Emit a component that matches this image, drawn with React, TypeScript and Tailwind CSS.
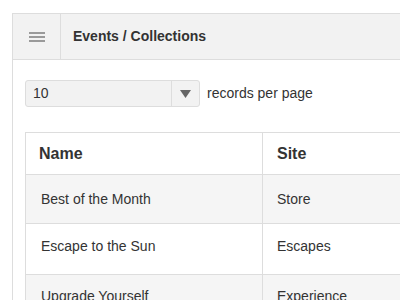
import React from "react";

const rows = [
  { name: "Best of the Month", site: "Store", rowCls: "h-[49px] bg-[#f5f5f5]", padCls: "pt-[16px]" },
  { name: "Escape to the Sun", site: "Escapes", rowCls: "h-[51px] bg-white", padCls: "pt-[14px]" },
  { name: "Upgrade Yourself", site: "Experience", rowCls: "h-[50px] bg-[#f5f5f5]", padCls: "pt-[13px]" },
];

export default function App() {
  return (
    <div
      className="w-[400px] h-[300px] overflow-hidden bg-white"
      style={{ fontFamily: '"Liberation Sans", Arial, sans-serif' }}
    >
      <div className="ml-[12px] mt-[13px] w-[420px] h-[400px] border-l border-t border-[#dddddd] bg-white">
        <div className="flex h-[46px] bg-[#f2f2f2] border-b border-[#dddddd]">
          <div className="w-[48px] border-r border-[#dddddd] flex items-center justify-center">
            <div className="flex flex-col gap-[2px] w-[16px]">
              <div className="h-[2px] bg-[#9a9a9a]" />
              <div className="h-[2px] bg-[#9a9a9a]" />
              <div className="h-[2px] bg-[#9a9a9a]" />
            </div>
          </div>
          <div className="flex items-center pl-[12px] text-[14px] font-bold text-[#333333]">
            Events / Collections
          </div>
        </div>
        <div className="pl-[12px] pt-[20px]">
          <div className="flex items-center gap-[7px]">
            <div className="flex w-[175px] h-[27px] rounded-[3px] border border-[#dddddd] bg-[#f2f2f2]">
              <div className="flex-1 flex items-center pl-[7px] text-[14px] text-[#333333]">10</div>
              <div className="w-[28px] border-l border-[#dddddd] flex items-center justify-center">
                <svg width="11" height="8" viewBox="0 0 11 8">
                  <path d="M0 0 L11 0 L5.5 8 Z" fill="#666666" />
                </svg>
              </div>
            </div>
            <div className="text-[14px] text-[#333333]">records per page</div>
          </div>
          <div className="mt-[25px] border-l border-t border-[#dddddd]">
            <div className="flex h-[42px] border-b border-[#dddddd] bg-white text-[16px] font-bold text-[#333333]">
              <div className="w-[237px] border-r border-[#dddddd] flex items-center pl-[13px]">Name</div>
              <div className="flex-1 flex items-center pl-[14px]">Site</div>
            </div>
            {rows.map((r) => (
              <div
                key={r.name}
                className={`flex border-b border-[#dddddd] text-[14px] leading-[16px] text-[#333333] ${r.rowCls}`}
              >
                <div className={`w-[237px] border-r border-[#dddddd] pl-[15px] ${r.padCls}`}>{r.name}</div>
                <div className={`flex-1 pl-[14px] ${r.padCls}`}>{r.site}</div>
              </div>
            ))}
          </div>
        </div>
      </div>
    </div>
  );
}
